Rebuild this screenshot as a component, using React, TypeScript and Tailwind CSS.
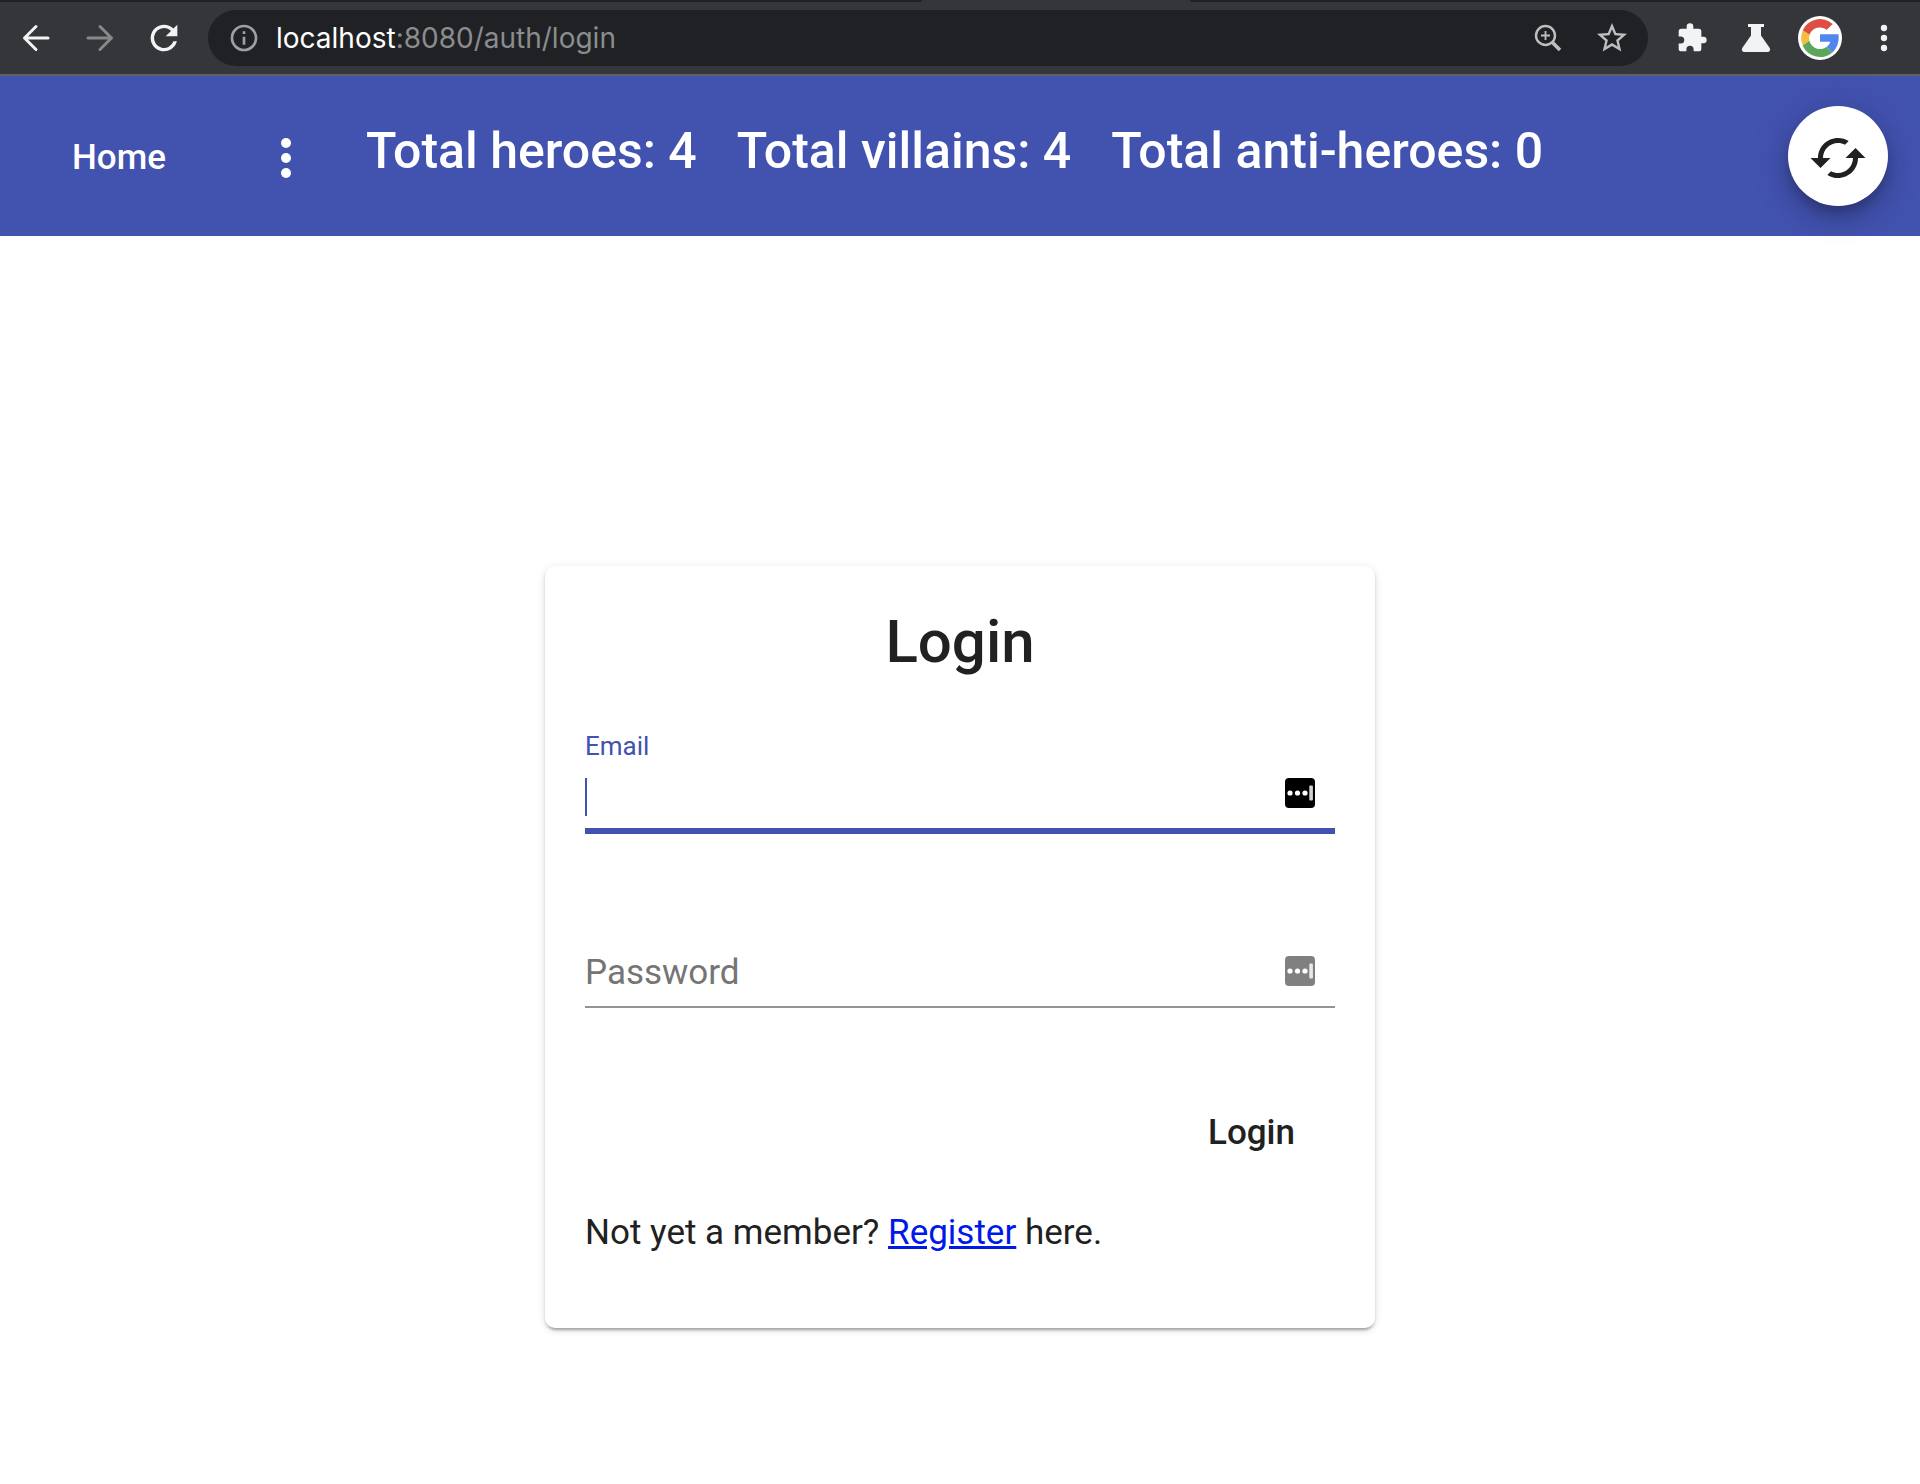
import React from "react";

function BackIcon() {
  return (
    <svg viewBox="0 0 40 40" className="size-10" fill="none" stroke="currentColor" strokeWidth="3" aria-hidden="true">
      <path d="M32 20H8.500M20 8.500 8.500 20 20 31.500" strokeLinejoin="round" strokeLinecap="round" />
    </svg>
  );
}

function ForwardIcon() {
  return (
    <svg viewBox="0 0 40 40" className="size-10" fill="none" stroke="currentColor" strokeWidth="3" aria-hidden="true">
      <path d="M8 20H31.500M20 8.500 31.500 20 20 31.500" strokeLinejoin="round" strokeLinecap="round" />
    </svg>
  );
}

function ReloadIcon() {
  return (
    <svg viewBox="0 0 24 24" className="size-10" fill="currentColor" aria-hidden="true">
      <path d="M17.65 6.35A7.96 7.96 0 0 0 12 4a8 8 0 1 0 7.73 10h-2.08A6 6 0 1 1 12 6c1.66 0 3.14.69 4.22 1.78L13 11h7V4l-2.35 2.35z" />
    </svg>
  );
}

function InfoIcon() {
  return (
    <svg viewBox="0 0 24 24" className="size-8 text-[#9aa0a6]" fill="currentColor" aria-hidden="true">
      <path d="M11 7h2v2h-2zm0 4h2v6h-2zm1-9a10 10 0 1 0 0 20 10 10 0 0 0 0-20zm0 18a8 8 0 1 1 0-16 8 8 0 0 1 0 16z" />
    </svg>
  );
}

function ZoomIcon() {
  return (
    <svg viewBox="0 0 32 32" className="size-8" fill="none" stroke="currentColor" aria-hidden="true">
      <circle cx="13.5" cy="13.5" r="9.5" strokeWidth="2.4" />
      <path d="M20.2 20.2 28 28" strokeWidth="3.6" />
      <path d="M13.5 9v9M9 13.5h9" strokeWidth="1.8" />
    </svg>
  );
}

function StarIcon() {
  return (
    <svg viewBox="0 0 24 24" className="size-9" fill="currentColor" aria-hidden="true">
      <path d="m22 9.24-7.19-.62L12 2 9.19 8.63 2 9.24l5.46 4.73L5.82 21 12 17.27 18.18 21l-1.63-7.03L22 9.24zM12 15.4l-3.76 2.27 1-4.28-3.32-2.88 4.38-.38L12 6.1l1.71 4.04 4.38.38-3.32 2.88 1 4.28L12 15.4z" />
    </svg>
  );
}

function PuzzleIcon() {
  return (
    <svg viewBox="0 0 24 24" className="size-8" fill="currentColor" aria-hidden="true">
      <path d="M20.5 11H19V7a2 2 0 0 0-2-2h-4V3.500a2.500 2.500 0 0 0-5 0V5H4a2 2 0 0 0-1.990 2v3.800H3.500a2.700 2.700 0 0 1 0 5.400H2V20a2 2 0 0 0 2 2h3.800v-1.500a2.700 2.700 0 0 1 5.400 0V22H17a2 2 0 0 0 2-2v-4h1.500a2.500 2.500 0 0 0 0-5z" />
    </svg>
  );
}

function FlaskIcon() {
  return (
    <svg viewBox="0 0 32 32" className="size-8" fill="currentColor" aria-hidden="true">
      <path d="M8 2h16v3h-3v8.500l8.400 12c1.600 2.500.4 4.500-2.400 4.500H5c-2.800 0-4-2-2.400-4.500L11 13.500V5H8z" />
    </svg>
  );
}

function GoogleLogo() {
  return (
    <svg viewBox="0 0 44 44" className="size-11" aria-hidden="true">
      <circle cx="22" cy="22" r="22" fill="#fff" />
      <path fill="#f3bc43" d="M5 14a19 19 0 0 0 0 16l6.600-4.600a11 11 0 0 1 0-7.200z" />
      <path fill="#dd4f43" d="M4.700 14.200A19 19 0 0 1 34.700 8l-6 5.800A11 11 0 0 0 11.600 18.600z" />
      <path fill="#5aa65b" d="M4.700 29.800A19 19 0 0 0 34.700 36.200l-6.200-5.200A11 11 0 0 1 11.400 25z" />
      <path fill="#5086ed" d="M22 18.200h18.500c.9 7.500-1.300 13.500-5.800 18l-6.200-5.200c1.900-1.300 3.200-3 3.800-5.200H22z" />
    </svg>
  );
}

function MoreVertIcon({ className, r }: { className: string; r: number }) {
  return (
    <svg viewBox="0 0 24 24" className={className} fill="currentColor" aria-hidden="true">
      <circle cx="12" cy="6" r={r} />
      <circle cx="12" cy="12" r={r} />
      <circle cx="12" cy="18" r={r} />
    </svg>
  );
}

function CachedIcon() {
  return (
    <svg viewBox="0 0 24 24" className="size-15" fill="currentColor" aria-hidden="true">
      <path d="m19 8-4 4h3c0 3.310-2.690 6-6 6-1.010 0-1.970-.25-2.800-.7l-1.460 1.460C8.970 19.540 10.430 20 12 20c4.420 0 8-3.580 8-8h3l-4-4zM6 12c0-3.310 2.690-6 6-6 1.010 0 1.970.25 2.800.7l1.460-1.460C15.030 4.460 13.570 4 12 4c-4.420 0-8 3.580-8 8H1l4 4 4-4H6z" />
    </svg>
  );
}

function PasswordManagerIcon() {
  return (
    <svg viewBox="0 0 30 30" className="size-[30px]" aria-hidden="true">
      <rect width="30" height="30" rx="4" fill="currentColor" />
      <circle cx="5" cy="15" r="2.600" fill="#fff" />
      <circle cx="12.500" cy="15" r="2.600" fill="#fff" />
      <circle cx="20" cy="15" r="2.600" fill="#fff" />
      <rect x="24.300" y="7.500" width="3.600" height="15" rx="1" fill="#fff" opacity="0.82" />
    </svg>
  );
}

function BrowserBar() {
  return (
    <div className="bg-[#35363a]">
      <div className="flex h-0.5">
        <div className="w-[48%] rounded-br-xs bg-[#202124]" />
        <div className="w-[14%]" />
        <div className="flex-1 rounded-bl-xs bg-[#202124]" />
      </div>
      <div className="flex h-[74px] items-center border-b-2 border-[#5f6063] px-4 text-[#f1f3f4]">
        <div className="flex gap-6">
          <button type="button" aria-label="Back"><BackIcon /></button>
          <button type="button" aria-label="Forward" className="text-[#87888a]"><ForwardIcon /></button>
          <button type="button" aria-label="Reload"><ReloadIcon /></button>
        </div>
        <div className="ml-6 flex h-14 flex-1 items-center rounded-full bg-[#202124] pr-[18px] pl-5 text-[#bdbec0]">
          <button type="button" aria-label="Site information"><InfoIcon /></button>
          <p className="ml-4 flex-1 font-[Inter,sans-serif] text-[28px] leading-10 text-[#8b8c8e]">
            <span className="text-white">localhost</span>:8080/auth/login
          </p>
          <button type="button" aria-label="Zoom" className="mr-[30px]"><ZoomIcon /></button>
          <button type="button" aria-label="Bookmark this page"><StarIcon /></button>
        </div>
        <div className="ml-7 flex items-center">
          <button type="button" aria-label="Extensions"><PuzzleIcon /></button>
          <button type="button" aria-label="Labs" className="ml-8"><FlaskIcon /></button>
          <button type="button" aria-label="Profile" className="mr-[22px] ml-[26px]"><GoogleLogo /></button>
          <button type="button" aria-label="Browser menu"><MoreVertIcon className="size-10" r={1.9} /></button>
        </div>
      </div>
    </div>
  );
}

function AppHeader() {
  return (
    <header className="flex h-40 items-center bg-[#4252af] pr-8 pl-[72px] text-white">
      <nav className="flex items-center pt-1">
        <a href="#home" className="text-[35px] leading-10 font-medium">Home</a>
        <button type="button" aria-label="Menu" className="ml-[90px]"><MoreVertIcon className="size-15" r={2} /></button>
      </nav>
      <div className="mb-2.5 ml-[50px] flex flex-1 gap-10 text-[50px] leading-15 font-medium whitespace-nowrap">
        <span>Total heroes: 4</span>
        <span>Total villains: 4</span>
        <span>Total anti-heroes: 0</span>
      </div>
      <button
        type="button"
        aria-label="Refresh"
        className="flex size-25 items-center justify-center rounded-full bg-white pt-1 text-[#212121] shadow-[0_8px_12px_-2px_rgba(0,0,0,0.2),0_15px_25px_rgba(0,0,0,0.14),0_2px_45px_rgba(0,0,0,0.12)]"
      >
        <CachedIcon />
      </button>
    </header>
  );
}

function LoginCard() {
  return (
    <form className="w-[830px] rounded-[10px] bg-white p-10 text-[#212121] shadow-[0_5px_3px_-3px_rgba(0,0,0,0.2),0_2px_3px_rgba(0,0,0,0.14),0_2px_8px_rgba(0,0,0,0.12)]">
      <h1 className="text-center text-[60px] leading-[72px] font-medium">Login</h1>
      <div className="mt-[52px]">
        <label htmlFor="email" className="block text-[26px] leading-8 text-[#4252af]">Email</label>
        <div className="mt-3 flex h-[60px] items-start border-b-6 border-[#4252af] pt-1 pr-5">
          <span className="h-[38px] w-0.5 bg-[#4252af]" />
          <input id="email" type="email" className="h-10 min-w-0 flex-1 text-[35px] outline-none" />
          <span className="text-black"><PasswordManagerIcon /></span>
        </div>
      </div>
      <div className="mt-[114px] flex h-[60px] items-start border-b-2 border-[#949494] pr-5">
        <input
          type="password"
          aria-label="Password"
          placeholder="Password"
          className="h-[50px] min-w-0 flex-1 text-[35px] outline-none placeholder:text-[#757575] placeholder:opacity-100"
        />
        <span className="mt-2 text-[#808080]"><PasswordManagerIcon /></span>
      </div>
      <div className="mt-[105px] flex justify-end pr-10">
        <button type="submit" className="text-[35px] leading-10 font-medium">Login</button>
      </div>
      <p className="mt-15 mb-[35px] text-[35px] leading-10">
        Not yet a member? <a href="#register" className="text-[#0019e8] underline">Register</a> here.
      </p>
    </form>
  );
}

export default function App() {
  return (
    <div className="flex min-h-screen flex-col bg-white font-[Roboto,sans-serif]">
      <BrowserBar />
      <AppHeader />
      <main className="flex flex-1 items-start justify-center pt-[330px]">
        <LoginCard />
      </main>
    </div>
  );
}
